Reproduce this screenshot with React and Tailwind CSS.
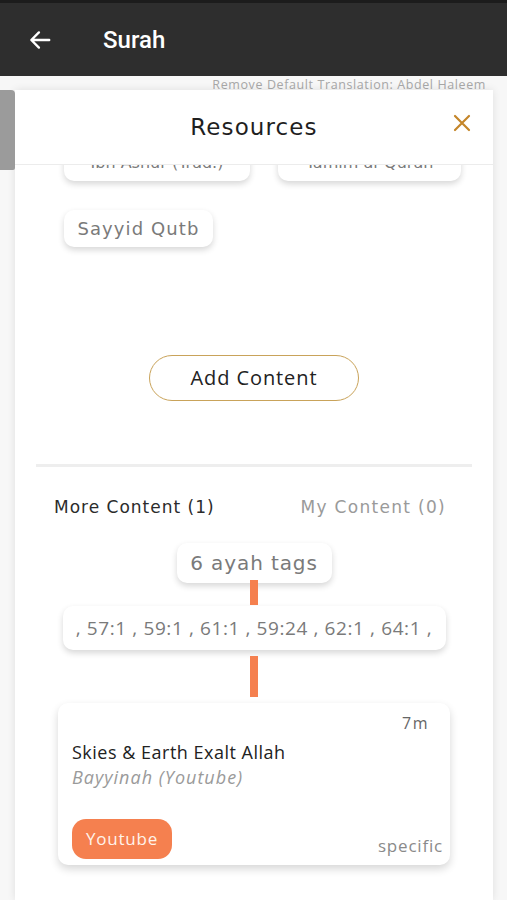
import React from "react";

const chip = "bg-white rounded-[10px] shadow-[0_3px_6px_rgba(0,0,0,0.16)] text-[#7a7a7a]";
const wide = { fontFamily: '"DejaVu Sans", "Open Sans", sans-serif' };
const nun = { fontFamily: '"Open Sans", "Noto Sans", sans-serif' };

export default function App() {
  return (
    <div className="w-[507px] h-[900px] bg-[#f7f7f7] overflow-hidden relative flex flex-col" style={wide}>
      <div className="h-[76px] shrink-0 bg-[#2e2e2e] border-t-[3px] border-[#1c1c1c] flex items-center pl-[27px]">
        <svg width="26" height="26" viewBox="0 0 24 24" fill="none" stroke="white" strokeWidth="2.2" strokeLinecap="round" strokeLinejoin="round">
          <path d="M20.5 12H4.5M11 5l-7 7 7 7" />
        </svg>
        <span className="ml-[50px] text-white text-[24px] font-medium" style={{ fontFamily: 'Roboto, "Liberation Sans", sans-serif' }}>Surah</span>
      </div>
      <div className="h-[14px] shrink-0 flex justify-end pr-[21px] text-[12.5px] leading-[18px] text-[#a8a8a8] tracking-[0.6px]" style={nun}>
        Remove Default Translation: Abdel Haleem
      </div>
      <div className="absolute left-0 top-[90px] w-[15px] h-[80px] bg-[#9b9b9b] rounded-tr-[4px] rounded-br-[2px]" />
      <div className="ml-[15px] w-[478px] flex-1 bg-white shadow-[0_0_8px_rgba(0,0,0,0.10)] flex flex-col min-h-0">
        <div className="relative z-10 h-[75px] shrink-0 bg-white border-b border-[#ececec] flex items-center justify-center">
          <span className="text-[23px] text-[#1f1f1f] tracking-[1.1px]">Resources</span>
          <svg className="absolute right-[22px] top-[24px]" width="18" height="18" viewBox="0 0 18 18" stroke="#c4862a" strokeWidth="2.2" strokeLinecap="round">
            <path d="M2 2l14 14M16 2L2 16" />
          </svg>
        </div>
        <div className="flex-1 overflow-hidden flex flex-col min-h-0">
          <div className="flex gap-[28px] pl-[49px] mt-[-21px]">
            <div className={`${chip} w-[186px] h-[37px] flex items-center justify-center text-[16px]`}>Ibn Ashur (Trad.)</div>
            <div className={`${chip} w-[183px] h-[37px] flex items-center justify-center text-[16px]`}>Tafhim al-Quran</div>
          </div>
          <div className="pl-[49px] mt-[29px]">
            <div className={`${chip} w-[149px] h-[37px] flex items-center justify-center text-[18px] tracking-[1.1px]`}>Sayyid Qutb</div>
          </div>
          <div className="flex justify-center mt-[108px]">
            <div className="w-[210px] h-[46px] rounded-full border-[1.5px] border-[#c9a35a] flex items-center justify-center text-[20px] text-[#222] tracking-[0.9px]" style={nun}>
              Add Content
            </div>
          </div>
          <div className="mx-[21px] mt-[63px] h-[3px] bg-[#eeeeee]" />
          <div className="flex justify-between pl-[39px] pr-[47px] mt-[28px] text-[17px] leading-[24px] tracking-[1px]">
            <span className="text-[#2b2b2b]">More Content (1)</span>
            <span className="text-[#9a9a9a] tracking-[1.3px]">My Content (0)</span>
          </div>
          <div className="flex flex-col items-center mt-[24px]">
            <div className={`${chip} relative z-0 w-[155px] h-[40px] flex items-center justify-center text-[20px] tracking-[0.9px]`}>6 ayah tags</div>
            <div className="w-[8px] h-[25px] bg-[#f5804f] mt-[-3px] relative z-10" />
            <div className={`${chip} w-[383px] h-[44px] mt-[1px] flex items-center justify-center text-[19px] tracking-[0.6px]`} style={nun}>, 57:1 , 59:1 , 61:1 , 59:24 , 62:1 , 64:1 ,</div>
            <div className="w-[8px] h-[41px] bg-[#f5804f] mt-[6px]" />
            <div className="mt-[6px] w-[392px] h-[162px] bg-white rounded-[10px] shadow-[0_4px_8px_rgba(0,0,0,0.16)] flex flex-col px-[14px] pt-[10px] pb-[6px]" style={nun}>
              <div className="text-right pr-[7px] text-[16px] text-[#666] leading-[20px] tracking-[1.5px]">7m</div>
              <div className="mt-[8px] text-[18px] text-[#222] leading-[22px] tracking-[0.5px]">Skies &amp; Earth Exalt Allah</div>
              <div className="mt-[3px] text-[18px] text-[#9a9a9a] italic leading-[22px] tracking-[1px]">Bayyinah (Youtube)</div>
              <div className="mt-auto flex justify-between items-end">
                <div className="w-[100px] h-[40px] rounded-[14px] bg-[#f5804f] flex items-center justify-center text-[17px] text-[#fff3ea] tracking-[0.8px]">Youtube</div>
                <div className="text-[17px] text-[#8a8a8a] leading-[22px] pb-[2px] mr-[-7px] tracking-[0.8px]">specific</div>
              </div>
            </div>
          </div>
        </div>
      </div>
    </div>
  );
}
